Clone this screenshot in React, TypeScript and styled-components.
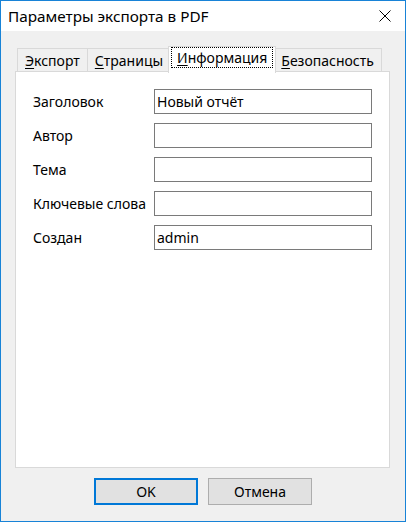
import { FC } from "react";
import styled, { createGlobalStyle } from "styled-components";

const GlobalStyle = createGlobalStyle`
  html, body {
    margin: 0;
    padding: 0;
    background: #f0f0f0;
  }

  * {
    box-sizing: border-box;
  }
`;

interface IField {
  label: string;
  value: string;
}

const fields: IField[] = [
  { label: "Заголовок", value: "Новый отчёт" },
  { label: "Автор", value: "" },
  { label: "Тема", value: "" },
  { label: "Ключевые слова", value: "" },
  { label: "Создан", value: "admin" },
];

const tabs = [
  { hot: "Э", rest: "кспорт" },
  { hot: "С", rest: "траницы" },
  { hot: "И", rest: "нформация" },
  { hot: "Б", rest: "езопасность" },
];

const activeTab = 2;

const CloseIcon: FC = () => (
  <svg width="12" height="12" viewBox="0 0 12 12">
    <path d="M0.5 0.5 L11.5 11.5 M11.5 0.5 L0.5 11.5" stroke="#000" strokeWidth="1" />
  </svg>
);

const App: FC = () => {
  return (
    <>
      <GlobalStyle />
      <Window>
        <TitleBar>
          <Title>Параметры экспорта в PDF</Title>
          <CloseButton>
            <CloseIcon />
          </CloseButton>
        </TitleBar>

        <Body>
          <TabRow>
            {tabs.map((tab, i) => (
              <Tab key={tab.hot} active={i === activeTab}>
                <TabLabel active={i === activeTab}>
                  <u>{tab.hot}</u>
                  {tab.rest}
                </TabLabel>
              </Tab>
            ))}
          </TabRow>

          <Panel>
            <Form>
              {fields.map((field) => (
                <Row key={field.label}>
                  <Label>{field.label}</Label>
                  <TextBox>{field.value}</TextBox>
                </Row>
              ))}
            </Form>
          </Panel>

          <ButtonRow>
            <Button primary>OK</Button>
            <Button>Отмена</Button>
          </ButtonRow>
        </Body>
      </Window>
    </>
  );
};

export default App;

const font = `"Noto Sans", "Liberation Sans", sans-serif`;

const Window = styled.div`
  width: 406px;
  height: 522px;
  border: 1px solid #1883d7;
  background: #f0f0f0;
  display: flex;
  flex-direction: column;
  font-family: ${font};
  font-size: 14px;
  color: #000;
`;

const TitleBar = styled.div`
  height: 30px;
  background: #fff;
  display: flex;
  align-items: center;
  justify-content: space-between;
  padding: 0 14px 0 7px;
`;

const Title = styled.span`
  font-size: 15.3px;
`;

const CloseButton = styled.div`
  width: 12px;
  height: 12px;
  display: flex;
`;

const Body = styled.div`
  flex: 1;
  display: flex;
  flex-direction: column;
  padding: 15px 15px 0 14px;
`;

const TabRow = styled.div`
  height: 26px;
  display: flex;
  align-items: flex-end;
  padding-left: 3px;
`;

const Tab = styled.div<{ active?: boolean }>`
  position: relative;
  height: ${(p) => (p.active ? "27px" : "24px")};
  margin: ${(p) => (p.active ? "0 -2px -1px -3px" : "0 0 0 -1px")};
  padding: ${(p) => (p.active ? "1px 3px 0" : "0 7px")};
  border: 1px solid #d9d9d9;
  border-bottom: ${(p) => (p.active ? "none" : "1px solid #d9d9d9")};
  background: ${(p) => (p.active ? "#fff" : "#f0f0f0")};
  z-index: ${(p) => (p.active ? 2 : 1)};
  display: flex;
  align-items: flex-start;
`;

const TabLabel = styled.span<{ active?: boolean }>`
  line-height: 19px;
  padding: ${(p) => (p.active ? "0 5px" : "2px 0 0")};
  outline: ${(p) => (p.active ? "1px dotted #000" : "none")};
  outline-offset: 0;

  u {
    text-decoration-thickness: 1px;
    text-underline-offset: 2px;
  }
`;

const Panel = styled.div`
  height: 397px;
  margin-top: -1px;
  background: #fff;
  border: 1px solid #d9d9d9;
  padding: 17px 17px 0 17px;
`;

const Form = styled.div`
  display: flex;
  flex-direction: column;
  gap: 9px;
`;

const Row = styled.div`
  display: grid;
  grid-template-columns: 121px 218px;
  align-items: center;
`;

const Label = styled.span`
  white-space: nowrap;
`;

const TextBox = styled.div`
  height: 25px;
  border: 1px solid #7a7a7a;
  background: #fff;
  padding: 0 2px;
  display: flex;
  align-items: center;
`;

const ButtonRow = styled.div`
  display: flex;
  justify-content: center;
  gap: 10px;
  margin-top: 10px;
  padding-left: 1px;
`;

const Button = styled.div<{ primary?: boolean }>`
  width: 104px;
  height: 27px;
  background: #e1e1e1;
  border: ${(p) => (p.primary ? "2px solid #0078d7" : "1px solid #adadad")};
  display: flex;
  align-items: center;
  justify-content: center;
`;
